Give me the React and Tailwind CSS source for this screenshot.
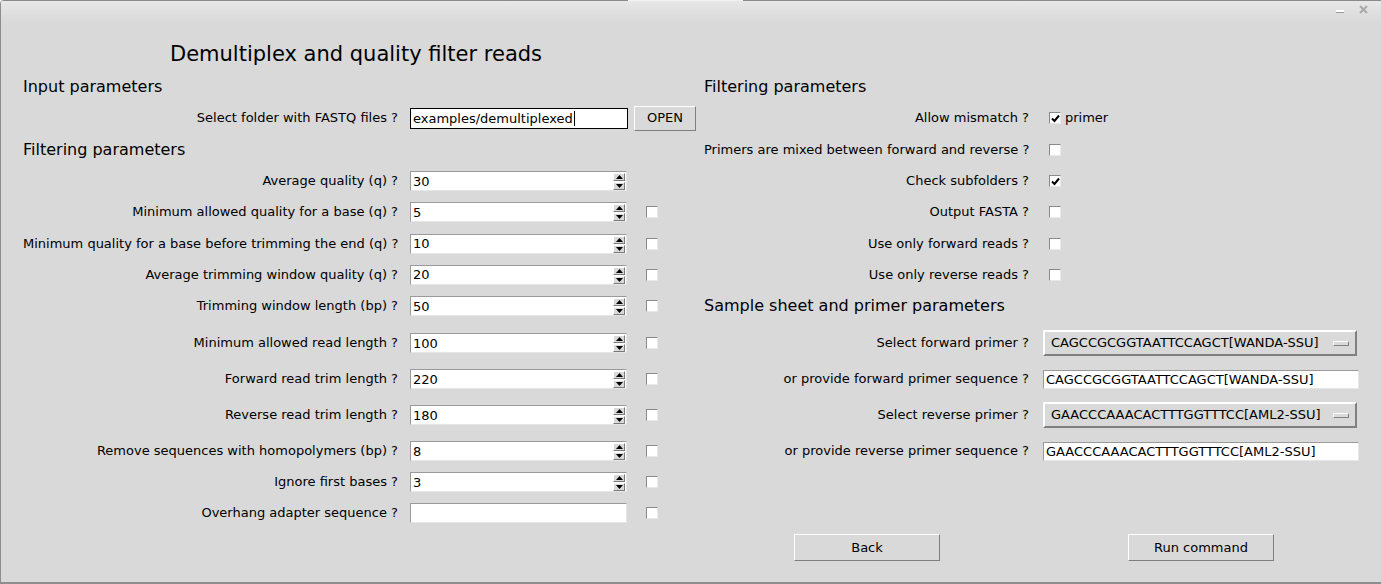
import React from "react";

const font = { fontFamily: '"DejaVu Sans", "Liberation Sans", sans-serif' };

function Entry({ value = "", width = "w-[217px]", focused = false, spin = false, height = "h-[20px]" }) {
  return (
    <div
      className={`relative flex ${height} ${width} items-center bg-white ${
        focused
          ? "border border-black"
          : "border border-t-[#9a9a9a] border-l-[#9a9a9a] border-b-[#e6e6e6] border-r-[#e6e6e6]"
      }`}
    >
      <span className="pl-[2px] text-[13px] leading-none text-black whitespace-nowrap">{value}</span>
      {focused && <span className="ml-[1px] inline-block h-[15px] w-[1px] bg-black" />}
      {spin && (
        <div className="absolute right-[1px] top-[1px] flex flex-col gap-[1px]">
          <SpinArrow up />
          <SpinArrow />
        </div>
      )}
    </div>
  );
}

function SpinArrow({ up = false }) {
  return (
    <div className="flex h-[8px] w-[12px] items-center justify-center border border-t-white border-l-white border-b-[#7a7a7a] border-r-[#7a7a7a] bg-[#d9d9d9]">
      <svg width="7" height="4" viewBox="0 0 7 4">
        {up ? <polygon points="0,4 7,4 3.5,0" fill="#000" /> : <polygon points="0,0 7,0 3.5,4" fill="#000" />}
      </svg>
    </div>
  );
}

function Check({ checked = false }) {
  return (
    <div className="flex h-[12px] w-[12px] items-center justify-center border border-t-[#8a8a8a] border-l-[#8a8a8a] border-b-[#e9e9e9] border-r-[#e9e9e9] bg-white">
      {checked && (
        <svg width="9" height="9" viewBox="0 0 9 9">
          <path d="M1 4.5 L3.5 7 L8 1.5" stroke="#000" strokeWidth="2" fill="none" />
        </svg>
      )}
    </div>
  );
}

function RaisedButton({ label, className = "" }) {
  return (
    <div
      className={`flex items-center justify-center border border-t-white border-l-white border-b-[#7f7f7f] border-r-[#7f7f7f] bg-[#d9d9d9] text-[13px] text-black ${className}`}
    >
      {label}
    </div>
  );
}

function OptionMenu({ label }) {
  return (
    <div className="flex h-[26px] w-[314px] items-center justify-between border-2 border-t-white border-l-white border-b-[#808080] border-r-[#808080] bg-[#d9d9d9] pl-[6px] pr-[6px] text-[13px] text-black">
      <span>{label}</span>
      <span className="h-[5px] w-[16px] border border-t-white border-l-white border-b-[#808080] border-r-[#808080] bg-[#d9d9d9]" />
    </div>
  );
}

function Label({ children, width }) {
  return <div className={`${width} shrink-0 text-right text-[13px] text-black whitespace-nowrap`}>{children}</div>;
}

function LeftRow({ label, children }) {
  return (
    <div className="flex items-center">
      <Label width="w-[375px]">{label}</Label>
      <div className="ml-[12px] flex items-center">{children}</div>
    </div>
  );
}

function LeftSpin({ label, value, check = true }) {
  return (
    <LeftRow label={label}>
      <Entry value={value} spin />
      {check ? (
        <div className="ml-[19px]">
          <Check />
        </div>
      ) : null}
    </LeftRow>
  );
}

function RightCheck({ label, checked, extra }) {
  return (
    <div className="flex items-center">
      <Label width="w-[325px]">{label}</Label>
      <div className="ml-[20px] flex items-center">
        <Check checked={checked} />
        {extra && <span className="ml-[4px] text-[13px] text-black">{extra}</span>}
      </div>
    </div>
  );
}

function RightField({ label, children }) {
  return (
    <div className="flex items-center">
      <Label width="w-[325px]">{label}</Label>
      <div className="ml-[14px]">{children}</div>
    </div>
  );
}

function Heading({ children }) {
  return <div className="text-[16px] text-black">{children}</div>;
}

function Row({ h, left, right }) {
  return (
    <div className={`flex ${h}`}>
      <div className="flex w-[703px] items-center pl-[22px]">{left}</div>
      <div className="flex flex-1 items-center">{right}</div>
    </div>
  );
}

export default function App() {
  return (
    <div style={font} className="relative h-[584px] w-[1381px] overflow-hidden rounded-tl-[4px] border-b-2 border-l border-[#8e8e8e] bg-[#d9d9d9]">
      <div className="relative h-[22px] bg-gradient-to-b from-[#e8e8e8] to-[#d9d9d9]">
        <div className="flex h-[1px]">
          <div className="w-[627px] bg-[#8a8a8a]" />
          <div className="w-[115px] bg-[#f2f2f2]" />
          <div className="flex-1 bg-[#8a8a8a]" />
        </div>
        <div className="absolute right-[13px] top-[5px] flex items-center gap-[15px]">
          <span className="mt-[2px] h-[2px] w-[8px] bg-white shadow-[0_1px_0_#9a9a9a]" />
          <svg width="9" height="9" viewBox="0 0 9 9">
            <path d="M1 1 L8 8 M8 1 L1 8" stroke="#a8a8a8" strokeWidth="2" />
          </svg>
        </div>
      </div>

      <div className="h-[17px]" />
      <div className="flex h-[32px] items-center pl-[169px] text-[21px] text-black">Demultiplex and quality filter reads</div>

      <Row h="h-[31px]" left={<Heading>Input parameters</Heading>} right={<Heading>Filtering parameters</Heading>} />

      <Row
        h="h-[32px]"
        left={
          <LeftRow label="Select folder with FASTQ files ?">
            <Entry value="examples/demultiplexed" focused height="h-[21px]" width="w-[218px]" />
            <RaisedButton label="OPEN" className="ml-[6px] h-[25px] w-[62px]" />
          </LeftRow>
        }
        right={<RightCheck label="Allow mismatch ?" checked extra="primer" />}
      />

      <Row
        h="h-[32px]"
        left={<Heading>Filtering parameters</Heading>}
        right={<RightCheck label="Primers are mixed between forward and reverse ?" />}
      />

      <Row
        h="h-[30px]"
        left={<LeftSpin label="Average quality (q) ?" value="30" check={false} />}
        right={<RightCheck label="Check subfolders ?" checked />}
      />
      <Row
        h="h-[32px]"
        left={<LeftSpin label="Minimum allowed quality for a base (q) ?" value="5" />}
        right={<RightCheck label="Output FASTA ?" />}
      />
      <Row
        h="h-[31px]"
        left={<LeftSpin label="Minimum quality for a base before trimming the end (q) ?" value="10" />}
        right={<RightCheck label="Use only forward reads ?" />}
      />
      <Row
        h="h-[31px]"
        left={<LeftSpin label="Average trimming window quality (q) ?" value="20" />}
        right={<RightCheck label="Use only reverse reads ?" />}
      />
      <Row
        h="h-[32px]"
        left={<LeftSpin label="Trimming window length (bp) ?" value="50" />}
        right={<Heading>Sample sheet and primer parameters</Heading>}
      />
      <Row
        h="h-[42px]"
        left={<LeftSpin label="Minimum allowed read length ?" value="100" />}
        right={
          <RightField label="Select forward primer ?">
            <OptionMenu label="CAGCCGCGGTAATTCCAGCT[WANDA-SSU]" />
          </RightField>
        }
      />
      <Row
        h="h-[30px]"
        left={<LeftSpin label="Forward read trim length ?" value="220" />}
        right={
          <RightField label="or provide forward primer sequence ?">
            <Entry value="CAGCCGCGGTAATTCCAGCT[WANDA-SSU]" width="w-[316px]" height="h-[19px]" />
          </RightField>
        }
      />
      <Row
        h="h-[42px]"
        left={<LeftSpin label="Reverse read trim length ?" value="180" />}
        right={
          <RightField label="Select reverse primer ?">
            <OptionMenu label="GAACCCAAACACTTTGGTTTCC[AML2-SSU]" />
          </RightField>
        }
      />
      <Row
        h="h-[30px]"
        left={<LeftSpin label="Remove sequences with homopolymers (bp) ?" value="8" />}
        right={
          <RightField label="or provide reverse primer sequence ?">
            <Entry value="GAACCCAAACACTTTGGTTTCC[AML2-SSU]" width="w-[316px]" height="h-[19px]" />
          </RightField>
        }
      />
      <Row h="h-[32px]" left={<LeftSpin label="Ignore first bases ?" value="3" />} right={null} />
      <Row
        h="h-[30px]"
        left={
          <LeftRow label="Overhang adapter sequence ?">
            <Entry value="" />
            <div className="ml-[19px]">
              <Check />
            </div>
          </LeftRow>
        }
        right={null}
      />

      <div className="mt-[6px] flex pl-[793px]">
        <RaisedButton label="Back" className="h-[27px] w-[146px]" />
        <RaisedButton label="Run command" className="ml-[188px] h-[27px] w-[146px]" />
      </div>
    </div>
  );
}
